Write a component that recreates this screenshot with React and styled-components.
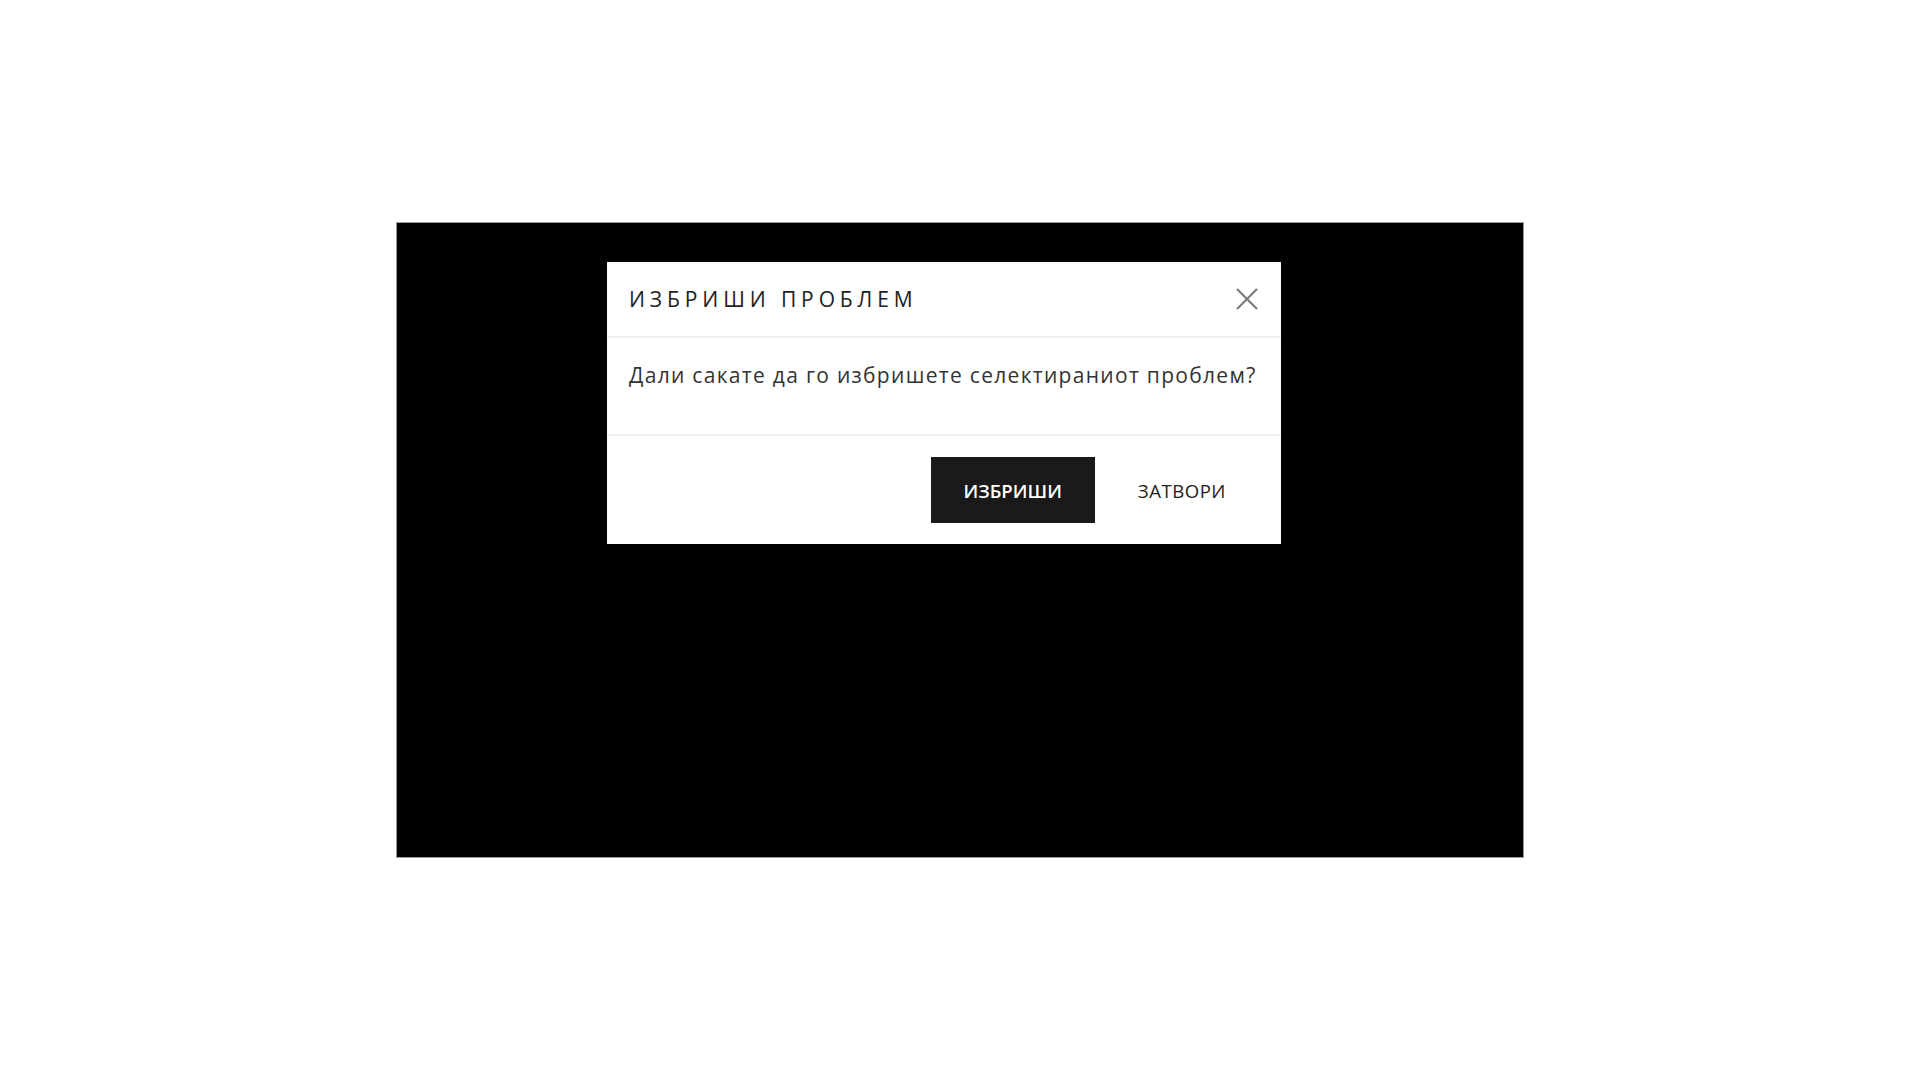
import React from "react";
import styled, { createGlobalStyle } from "styled-components";

const GlobalStyle = createGlobalStyle`
  html, body {
    margin: 0;
    padding: 0;
    background: #fff;
    font-family: "Open Sans", "Noto Sans", sans-serif;
  }
`;

const Page = styled.div`
  width: 1920px;
  height: 1080px;
  display: flex;
  align-items: center;
  justify-content: center;
`;

const Backdrop = styled.div`
  width: 1128px;
  height: 636px;
  box-sizing: border-box;
  background: #000;
  border: 1px solid #9a9a9a;
  padding: 39px 241px 0 210px;
`;

const Modal = styled.div`
  width: 674px;
  background: #fff;
  display: flex;
  flex-direction: column;
`;

const Header = styled.div`
  height: 76px;
  box-sizing: border-box;
  padding: 0 22px;
  display: flex;
  align-items: center;
  justify-content: space-between;
  border-bottom: 2px solid #f1f1f1;
`;

const Title = styled.h2`
  margin: 0;
  font-size: 21px;
  font-weight: 400;
  letter-spacing: 4.9px;
  color: #222;
`;

const CloseButton = styled.button`
  border: none;
  background: none;
  padding: 0;
  width: 24px;
  height: 24px;
  display: flex;
  align-items: center;
  justify-content: center;
  cursor: pointer;
`;

const Body = styled.div`
  height: 98px;
  box-sizing: border-box;
  padding: 23px 22px 0;
  border-bottom: 2px solid #f1f1f1;
`;

const Message = styled.p`
  margin: 0;
  font-size: 21px;
  letter-spacing: 1.3px;
  color: #333;
`;

const Footer = styled.div`
  padding: 21px 22px 21px;
  display: flex;
  justify-content: flex-end;
  gap: 10px;
`;

const Button = styled.button`
  height: 66px;
  padding: 0 33px;
  border: none;
  font-family: "Open Sans", "Noto Sans", sans-serif;
  font-size: 18.6px;
  font-weight: ${(props) => (props.$primary ? 600 : 400)};
  letter-spacing: ${(props) => (props.$primary ? "0" : "0.5px")};
  color: ${(props) => (props.$primary ? "#fff" : "#222")};
  background: ${(props) => (props.$primary ? "#1a1a1a" : "transparent")};
  cursor: pointer;
`;

const CloseIcon = () => (
  <svg width="22" height="22" viewBox="0 0 22 22">
    <path d="M1 1 L21 21 M21 1 L1 21" stroke="#777" strokeWidth="2" />
  </svg>
);

const App = () => {
  return (
    <>
      <GlobalStyle />
      <Page>
        <Backdrop>
          <Modal>
            <Header>
              <Title>ИЗБРИШИ ПРОБЛЕМ</Title>
              <CloseButton>
                <CloseIcon />
              </CloseButton>
            </Header>
            <Body>
              <Message>Дали сакате да го избришете селектираниот проблем?</Message>
            </Body>
            <Footer>
              <Button $primary>ИЗБРИШИ</Button>
              <Button>ЗАТВОРИ</Button>
            </Footer>
          </Modal>
        </Backdrop>
      </Page>
    </>
  );
};

export default App;
